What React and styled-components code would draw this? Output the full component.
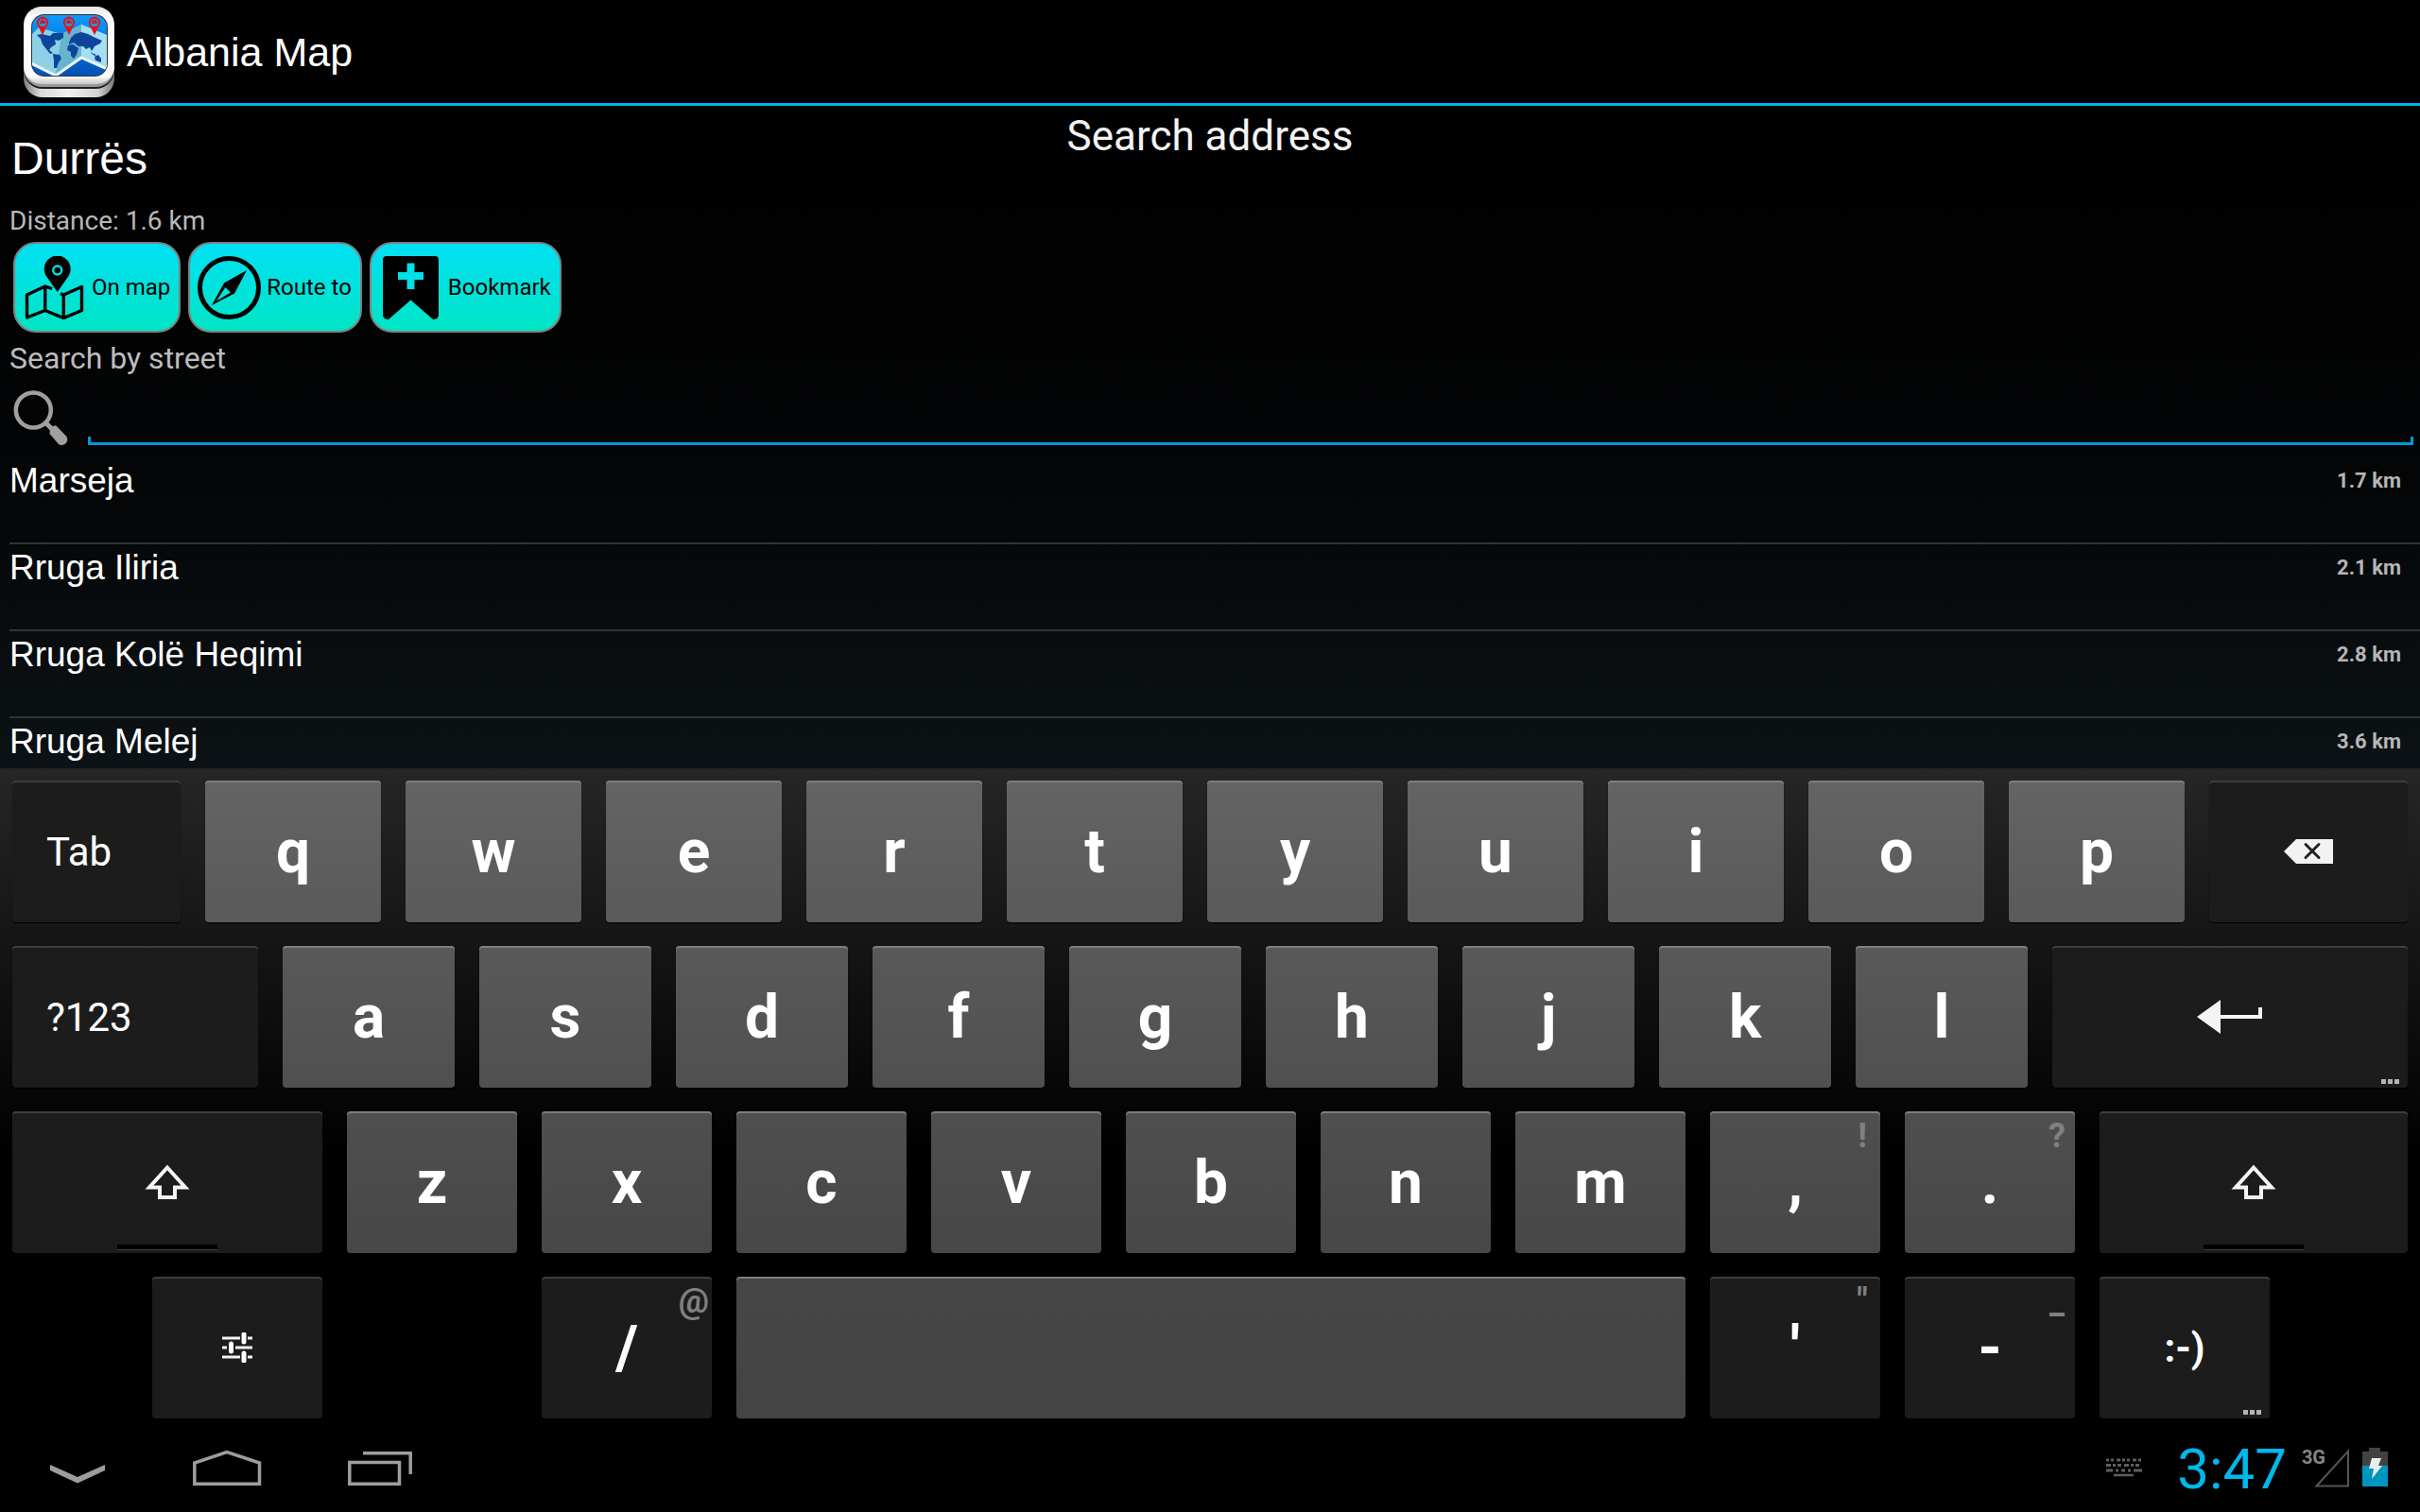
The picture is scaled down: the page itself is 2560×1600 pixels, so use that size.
import React from 'react'
import styled, { createGlobalStyle } from 'styled-components';

const streets = [
    { name: 'Marseja', distance: '1.7 km' },
    { name: 'Rruga Iliria', distance: '2.1 km' },
    { name: 'Rruga Kolë Heqimi', distance: '2.8 km' },
    { name: 'Rruga Melej', distance: '3.6 km' },
]

// size is the share of the row that a key takes
const letters = (text, size) => text.split('').map((label) => ({ label, size }))

const keyRows = [
    {
        tone: ['#646464', '#5a5a5a'],
        keys: [
            { word: 'Tab', size: 178, dark: true },
            ...letters('qwertyuiop', 186),
            { icon: 'backspace', size: 210, dark: true },
        ],
    },
    {
        tone: ['#595959', '#505050'],
        keys: [
            { word: '?123', size: 260, dark: true },
            ...letters('asdfghjkl', 182),
            { icon: 'enter', size: 376, dark: true, more: true },
        ],
    },
    {
        tone: ['#4f4f4f', '#474747'],
        keys: [
            { icon: 'shift', size: 328, dark: true, lock: true },
            ...letters('zxcvbnm', 180),
            { label: ',', hint: '!', size: 180 },
            { label: '.', hint: '?', size: 180 },
            { icon: 'shift', size: 326, dark: true, lock: true },
        ],
    },
    {
        tone: ['#464646', '#444444'],
        keys: [
            { blank: true, size: 122 },
            { icon: 'settings', size: 180, dark: true },
            { blank: true, size: 180 },
            { label: '/', hint: '@', size: 180, dark: true },
            { icon: 'space', size: 1004 },
            { label: "'", hint: '"', size: 180, dark: true },
            { label: '-', hint: '_', size: 180, dark: true },
            { smiley: ':-)', size: 180, dark: true, more: true },
            { blank: true, size: 120 },
        ],
    },
]

const keyIcons = {
    backspace: (
        <svg width="54" height="28" viewBox="0 0 54 28">
            <path d="M1 14L14 1H53V27H14Z" fill="#f2f2f2" />
            <path d="M24 6.500L38 20.500M38 6.500L24 20.500" stroke="#222" strokeWidth="3" strokeLinecap="round" />
        </svg>
    ),
    enter: (
        <svg width="70" height="36" viewBox="0 0 70 36">
            <path d="M0 18L25 0V16H65V8H69V20H25V36Z" fill="#f4f4f4" />
        </svg>
    ),
    shift: (
        <svg width="48" height="38" viewBox="0 0 48 38">
            <path d="M24 3.500L43 24.500H32V35H16V24.500H5Z" fill="none" stroke="#f4f4f4" strokeWidth="4" />
        </svg>
    ),
    settings: (
        <svg width="32" height="32" viewBox="0 0 32 32">
            <path d="M0 6H19M27 6H32M0 16H5M14 16H32M0 26H19M27 26H32" stroke="#f4f4f4" strokeWidth="3" />
            <path d="M23 2V10M9.500 12V20M23 22V30" stroke="#fff" strokeWidth="5" strokeLinecap="round" />
        </svg>
    ),
    space: null,
}

function AppLogo() {
    return (
        <svg width="96" height="96" viewBox="0 0 96 96" aria-hidden="true">
            <defs>
                <linearGradient id="base" x1="0" x2="1" y1="0" y2="0">
                    <stop offset="0" stopColor="#7c7c7c" />
                    <stop offset="0.18" stopColor="#d8d8d8" />
                    <stop offset="0.5" stopColor="#efefef" />
                    <stop offset="0.82" stopColor="#d2d2d2" />
                    <stop offset="1" stopColor="#757575" />
                </linearGradient>
                <linearGradient id="bezel" x1="0" x2="0" y1="0" y2="1">
                    <stop offset="0" stopColor="#e4e4e4" />
                    <stop offset="0.15" stopColor="#ffffff" />
                    <stop offset="0.9" stopColor="#fafafa" />
                    <stop offset="1" stopColor="#c9c9c9" />
                </linearGradient>
                <linearGradient id="sea" x1="0" x2="0" y1="0" y2="1">
                    <stop offset="0" stopColor="#0b9cff" />
                    <stop offset="1" stopColor="#0350b4" />
                </linearGradient>
                <clipPath id="screen">
                    <rect x="9" y="9" width="79" height="64" rx="13" />
                </clipPath>
            </defs>
            <rect x="0" y="16" width="96" height="80" rx="20" fill="url(#base)" />
            <rect x="0" y="6" width="96" height="81" rx="20" fill="#222" />
            <rect x="0" y="3" width="96" height="82" rx="20" fill="#9a9a9a" />
            <rect x="0" y="0" width="96" height="82" rx="19" fill="url(#bezel)" />
            <rect x="8" y="8" width="81" height="66" rx="14" fill="#30363e" />
            <g clipPath="url(#screen)">
                <rect x="8" y="8" width="81" height="66" fill="url(#sea)" />
                <path d="M8 30L16 22L40 29L61 19L88 30V66L61 54L34 73L8 61Z" fill="#8ed0e6" />
                <path d="M40 29L61 19V54L34 73Z" fill="#68b4cf" />
                <path d="M61 19L88 30V66L61 54Z" fill="#a5dff0" />
                <path d="M8 60L34 73L61 54L88 66" fill="none" stroke="#eef6fa" strokeWidth="3" />
                <g fill="#0b469c">
                    <path d="M14 30L19 29L28 31L31 28L42 28L42 33L37 36L33 35L34 40L29 43L27 46L31 49L28 50L24 45L20 40L18 34Z" />
                    <path d="M31 50L38 51L40 55L37 59L35 65L32 65L32 57Z" />
                    <path d="M47 41L52 40L58 44L56 51L53 55L50 52L50 48L46 46Z" />
                    <path d="M48 38L50 33L54 29L61 27L68 29L76 33L83 36L81 39L75 42L72 47L70 43L66 45L63 42L58 42L53 38L48 40Z" />
                    <path d="M75 53L79 51L82 55L82 59L76 57Z" />
                    <path d="M70 48L77 51L75 52Z" />
                </g>
            </g>
            {[20, 48, 75].map((x) => (
                <g key={x}>
                    <path d={`M${x} 30L${x - 5} 20A6 6 0 1 1 ${x + 5} 20Z`} fill="#e5121c" />
                    <circle cx={x} cy="17" r="4" fill="#2a94d8" />
                    <path d={`M${x - 3} 18V16L${x - 1} 14H${x + 1}L${x + 3} 16V18Z`} fill="#b02a3c" />
                </g>
            ))}
        </svg>
    )
}

function ActionButton({ label, children }) {
    return (
        <Action type="button">
            <svg width="67" height="67" viewBox="0 0 67 67" aria-hidden="true">{children}</svg>
            {label}
        </Action>
    )
}

function KeyboardKey({ item, tone }) {
    if (item.blank) {
        return <Blank $size={item.size} />
    }
    return (
        <Key type="button" $size={item.size} $dark={item.dark} $tone={tone} $word={!!item.word} aria-label={item.icon}>
            {item.label}
            {item.word && <Word>{item.word}</Word>}
            {item.smiley && <Smiley>{item.smiley}</Smiley>}
            {item.icon && keyIcons[item.icon]}
            {item.hint && <Hint>{item.hint}</Hint>}
            {item.lock && <Lock />}
            {item.more && <More><i /><i /><i /></More>}
        </Key>
    )
}

export default function App() {
    return (
        <Page>
            <GlobalStyle />
            <TopBar>
                <AppLogo />
                <AppName>Albania Map</AppName>
            </TopBar>
            <Content>
                <Heading>
                    <City>Durrës</City>
                    <Title>Search address</Title>
                </Heading>
                <Distance>Distance: 1.6 km</Distance>
                <Actions>
                    <ActionButton label="On map">
                        <path d="M36.700 38L24.500 20.500A14 14 0 1 1 48.900 20.500Z" />
                        <circle cx="36.700" cy="15" r="4.500" fill="none" stroke="#00e0e4" strokeWidth="2.400" />
                        <path d="M31 34.500L23.700 32L4.500 41V65L23.700 57.500L43.300 65.500L62.500 57.500V32.500L43.300 41L40 39.500M23.700 32V57.500M43.300 41V65" fill="none" stroke="#000" strokeWidth="3.400" strokeLinejoin="round" />
                    </ActionButton>
                    <ActionButton label="Route to">
                        <circle cx="33.500" cy="33.500" r="31" fill="none" stroke="#000" strokeWidth="5" />
                        <path fillRule="evenodd" d="M52 15L39 39.500L15 52L28 28.500ZM29.500 33L19.800 47.500L35 38.500Z" />
                    </ActionButton>
                    <ActionButton label="Bookmark">
                        <path d="M8 0H59Q63 0 63 4V63Q62 67 57 67L33.500 46.500L10 67Q5 67 4 63V4Q4 0 8 0Z" />
                        <path d="M33.500 7.500V35M20 21H47" stroke="#00dfe6" strokeWidth="8" />
                    </ActionButton>
                </Actions>
                <SearchLabel htmlFor="street">Search by street</SearchLabel>
                <SearchRow>
                    <svg width="60" height="58" viewBox="0 0 60 58" aria-hidden="true">
                        <circle cx="21.300" cy="21" r="18.500" fill="none" stroke="#a0a0a0" strokeWidth="4.500" />
                        <path d="M34 34L42 42" stroke="#a0a0a0" strokeWidth="5" />
                        <path d="M39 41.500Q38.500 39.500 40.500 39Q44 36 46 38L56.500 49Q58 51 57 54Q55 58 51 58Q49 58 48 57L38.500 46Z" fill="#a0a0a0" />
                    </svg>
                    <SearchInput id="street" type="text" />
                </SearchRow>
                <Streets>
                    {streets.map((street) => (
                        <Street key={street.name}>
                            <StreetName>{street.name}</StreetName>
                            <StreetDistance>{street.distance}</StreetDistance>
                        </Street>
                    ))}
                </Streets>
            </Content>
            <Keyboard>
                {keyRows.map((row, index) => (
                    <KeyRow key={index}>
                        {row.keys.map((item, i) => (
                            <KeyboardKey key={i} item={item} tone={row.tone} />
                        ))}
                    </KeyRow>
                ))}
            </Keyboard>
            <SystemBar>
                <NavButtons>
                    <NavButton type="button" aria-label="Hide keyboard">
                        <svg width="72" height="40" viewBox="0 0 72 40" fill="#9c9e9c">
                            <path d="M7 16L36 29L65 16V22L36 35.500L7 22Z" />
                        </svg>
                    </NavButton>
                    <NavButton type="button" aria-label="Home">
                        <svg width="76" height="40" viewBox="0 0 76 40" fill="none" stroke="#9c9e9c" strokeWidth="3.500">
                            <path d="M1.800 36.200V14L36 2.500L70.500 14V36.200Z" />
                        </svg>
                    </NavButton>
                    <NavButton type="button" aria-label="Recent apps">
                        <svg width="68" height="40" viewBox="0 0 68 40" fill="none" stroke="#9c9e9c" strokeWidth="3.500">
                            <path d="M1.800 13.500H54.500V36.200H1.800ZM16 3.800H66.200V26" />
                        </svg>
                    </NavButton>
                </NavButtons>
                <Status>
                    <svg width="38" height="20" viewBox="0 0 38 20" fill="none" stroke="#5c605c" aria-hidden="true">
                        <path d="M0 2H38" strokeWidth="3" strokeDasharray="3 2 3 3 4 2" />
                        <path d="M0 7.500H38" strokeWidth="3" strokeDasharray="5 2 3 2 4 3" />
                        <path d="M0 13H7M10 13H13M16 13H20M23 13H26M29 13H38" strokeWidth="3" />
                        <path d="M8 18H29" strokeWidth="2.500" />
                    </svg>
                    <Clock>3:47</Clock>
                    <Signal>
                        <Network>3G</Network>
                        <svg width="38" height="42" viewBox="0 0 38 42" fill="none" stroke="#555" strokeWidth="2" aria-hidden="true">
                            <path d="M2.500 40.500L36 3.500V40.500Z" />
                        </svg>
                    </Signal>
                    <svg width="27" height="41" viewBox="0 0 27 41" aria-hidden="true">
                        <path d="M0 4H7V0H19V4H27V20H0Z" fill="#424242" />
                        <path d="M0 19H27V41H0Z" fill="#0095bd" />
                        <path d="M10 11H20L17 19H21L10 33L12 22H7Z" fill="#e6eef0" />
                    </svg>
                </Status>
            </SystemBar>
        </Page>
    )
}

const GlobalStyle = createGlobalStyle`
    * {
        box-sizing: border-box;
    }
    body {
        margin: 0;
        background-color: #000;
    }
    button, input {
        font-family: inherit;
    }
    svg {
        display: block;
        flex: none;
    }
`
const Page = styled.div`
    height: 100vh;
    display: flex;
    flex-direction: column;
    overflow: hidden;
    background-color: #000;
    color: white;
    font-family: Roboto, 'Open Sans', sans-serif;
`
const TopBar = styled.header`
    display: flex;
    align-items: center;
    gap: 13px;
    height: 112px;
    flex: none;
    padding-left: 25px;
    border-bottom: 3px solid #00b2e8;
`
const AppName = styled.h1`
    margin: 0;
    font-family: 'Liberation Sans', Arial, sans-serif;
    font-size: 43px;
    font-weight: 400;
    line-height: 52px;
`
const Content = styled.main`
    flex: 1 1 0;
    min-height: 0;
    overflow: hidden;
    padding-left: 10px;
    background: linear-gradient(#000, #030405 50%, #0c1215);
`
const Heading = styled.div`
    display: grid;
    grid-template-columns: 1fr auto 1fr;
    align-items: start;
    padding-right: 10px;
`
const City = styled.h2`
    margin: 0;
    padding: 28px 0 0 2px;
    font-family: 'Liberation Sans', Arial, sans-serif;
    font-size: 48px;
    font-weight: 400;
    line-height: 56px;
`
const Title = styled.h2`
    margin: 0;
    padding-top: 5px;
    font-size: 44px;
    font-weight: 400;
    line-height: 54px;
    color: #f3f3f3;
`
const Distance = styled.p`
    margin: 20px 0 4px;
    font-size: 28px;
    line-height: 36px;
    color: #b8b8b8;
`
const Actions = styled.div`
    display: flex;
    gap: 8px;
    padding-left: 4px;
`
const Action = styled.button`
    display: flex;
    align-items: center;
    gap: 6px;
    height: 96px;
    padding: 0 9px 0 8px;
    border: 2px solid #808080;
    border-radius: 24px;
    background: linear-gradient(#00e0f4, #00e5c4);
    color: black;
    font-size: 24px;
`
const SearchLabel = styled.label`
    display: block;
    margin-top: 7px;
    font-size: 32px;
    line-height: 40px;
    color: #bdbdbd;
`
const SearchRow = styled.div`
    display: flex;
    align-items: flex-end;
    gap: 19px;
    height: 85px;
    padding: 0 7px 13px 4px;
`
const SearchInput = styled.input`
    flex: 1;
    min-width: 0;
    height: 56px;
    padding: 0 12px;
    border: none;
    outline: none;
    color: white;
    font-size: 32px;
    background:
        linear-gradient(#0099d5, #0099d5) left bottom / 3px 9px no-repeat,
        linear-gradient(#0099d5, #0099d5) right bottom / 3px 9px no-repeat,
        linear-gradient(#0099d5, #0099d5) left bottom / 100% 3px no-repeat;
`
const Streets = styled.ul`
    margin: 0;
    padding: 0;
    list-style: none;
`
const Street = styled.li`
    display: flex;
    justify-content: space-between;
    align-items: flex-start;
    height: 92px;
    padding: 3px 20px 0 0;
    border-bottom: 2px solid #303436;
`
const StreetName = styled.span`
    font-family: 'Liberation Sans', Arial, sans-serif;
    font-size: 37px;
    line-height: 44px;
`
const StreetDistance = styled.span`
    font-size: 22px;
    font-weight: 700;
    line-height: 44px;
    color: #b6b6b6;
`
const Keyboard = styled.section`
    flex: none;
    display: flex;
    flex-direction: column;
    gap: 25px;
    padding: 13px 13px 0;
    background: linear-gradient(#262626, #000 60%);
`
const KeyRow = styled.div`
    display: flex;
    gap: 26px;
    height: 150px;
`
const Blank = styled.span`
    flex: ${(props) => props.$size} 1 0;
`
const Key = styled.button`
    position: relative;
    flex: ${(props) => props.$size} 1 0;
    min-width: 0;
    display: flex;
    align-items: center;
    justify-content: ${(props) => (props.$word ? 'flex-start' : 'center')};
    padding: 0;
    border: none;
    border-radius: 4px;
    background: ${(props) => (props.$dark ? '#1c1c1c' : `linear-gradient(${props.$tone.join(', ')})`)};
    box-shadow: inset 0 2px 0 ${(props) => (props.$dark ? '#3e3e3e' : '#7e7e7e')}, 0 1px 1px #000;
    color: white;
    font-size: 64px;
    font-weight: 700;
`
const Word = styled.span`
    margin-left: 36px;
    font-size: 42px;
    font-weight: 400;
`
const Smiley = styled.span`
    font-size: 42px;
`
const Hint = styled.span`
    position: absolute;
    top: 5px;
    right: 0;
    width: 38px;
    display: flex;
    justify-content: center;
    font-size: 36px;
    line-height: 42px;
    color: #808080;
`
const Lock = styled.span`
    position: absolute;
    bottom: 3px;
    left: calc(50% - 53px);
    width: 106px;
    height: 6px;
    background-color: #000;
    border-bottom: 1px solid #444;
`
const More = styled.span`
    position: absolute;
    right: 9px;
    bottom: 4px;
    display: flex;
    gap: 2px;

    i {
        width: 5px;
        height: 5px;
        background-color: #b4b4b4;
    }
`
const SystemBar = styled.footer`
    flex: none;
    display: flex;
    justify-content: space-between;
    align-items: center;
    height: 99px;
    padding: 0 34px 0 2px;
`
const NavButtons = styled.nav`
    display: flex;
`
const NavButton = styled.button`
    display: flex;
    align-items: center;
    justify-content: center;
    width: 160px;
    height: 99px;
    padding: 6px 0 0;
    border: none;
    background: none;
`
const Status = styled.div`
    display: flex;
    align-items: center;
    padding-top: 4px;
`
const Clock = styled.time`
    margin: 0 16px 0 37px;
    padding-top: 4px;
    font-size: 60px;
    line-height: 72px;
    color: #00b8ec;
`
const Signal = styled.div`
    display: flex;
    align-items: flex-start;
    margin-right: 13px;

    svg {
        margin-left: -12px;
    }
`
const Network = styled.span`
    font-size: 20px;
    font-weight: 700;
    line-height: 20px;
    color: #868686;
`
